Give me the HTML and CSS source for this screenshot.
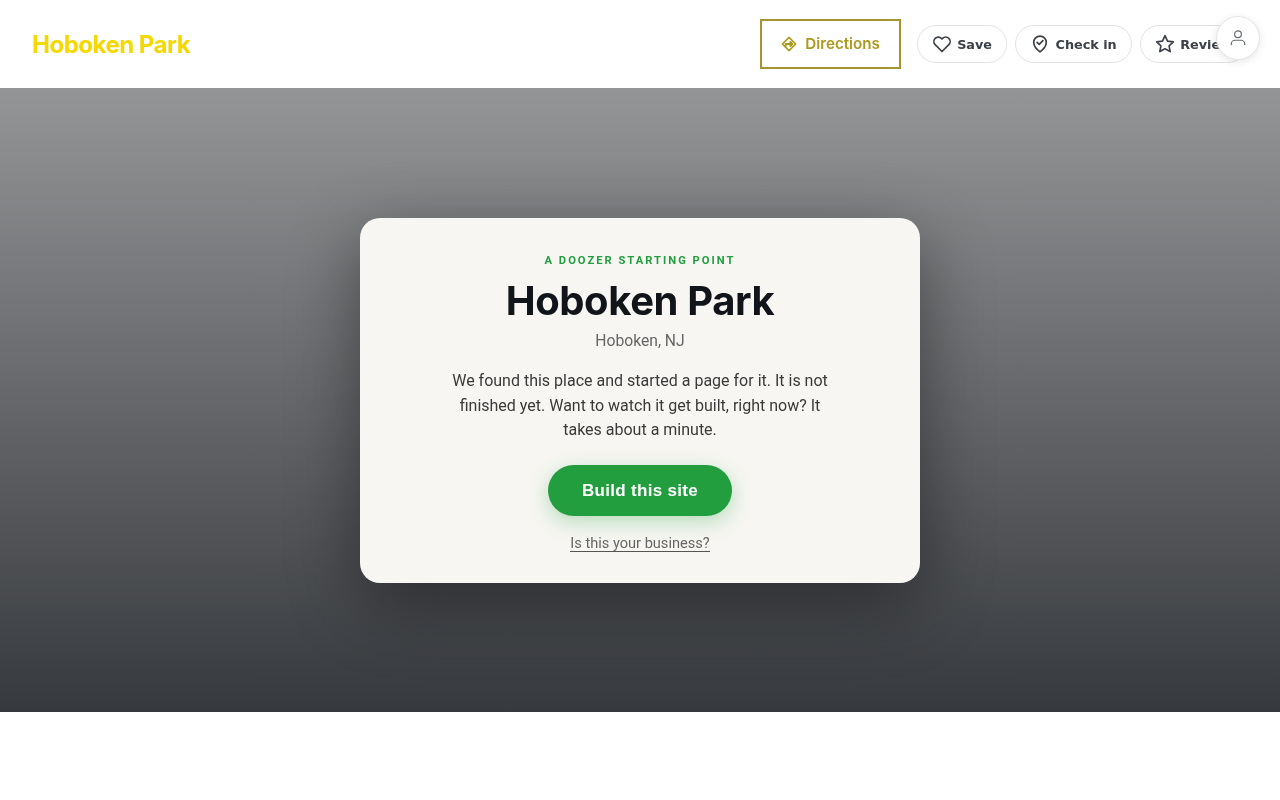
FILE: index.html
```html
<!DOCTYPE html>
<html lang="en">

<head>
    <meta charset="UTF-8">
    <meta name="viewport" content="width=device-width, initial-scale=1.0">
    <title>Hoboken Park</title>
    <link rel="stylesheet" href="styles.css">
</head>

<body>
    <header class="topbar">
        <a class="brand" href="#">Hoboken Park</a>
        <nav class="actions">
            <a class="directions" href="#">
                <svg width="16" height="16" viewBox="0 0 24 24" fill="none" stroke="currentColor" stroke-width="2.400" stroke-linejoin="round" stroke-linecap="round">
                    <path d="M12 2 22 12 12 22 2 12Z" />
                    <path stroke-width="3" d="M7 15v-3h10M14 9l3 3-3 3" />
                </svg>
                Directions
            </a>
            <a class="pill" href="#">
                <svg width="20" height="20" viewBox="0 0 24 24" fill="none" stroke="currentColor" stroke-width="2" stroke-linejoin="round">
                    <path d="M12 21 3.800 12.800a5.300 5.300 0 0 1 7.500-7.500l.7.7.7-.7a5.300 5.300 0 0 1 7.500 7.500Z" />
                </svg>
                Save
            </a>
            <a class="pill" href="#">
                <svg width="20" height="20" viewBox="0 0 24 24" fill="none" stroke="currentColor" stroke-width="2" stroke-linejoin="round" stroke-linecap="round">
                    <path d="M12 21.500s7.500-5.500 7.500-11.500a7.500 7.500 0 0 0-15 0c0 6 7.500 11.500 7.500 11.500Z" />
                    <path d="m8.500 10 2.500 2.500 4.500-4.500" />
                </svg>
                Check in
            </a>
            <a class="pill" href="#">
                <svg width="20" height="20" viewBox="0 0 24 24" fill="none" stroke="currentColor" stroke-width="2" stroke-linejoin="round">
                    <path d="m12 2 3 6.500 7 .9-5.100 4.800 1.300 6.900L12 17.700l-6.200 3.400 1.300-6.900L2 9.400l7-.9Z" />
                </svg>
                Review
            </a>
        </nav>
        <button class="account" aria-label="Account">
            <svg width="18" height="18" viewBox="0 0 24 24" fill="none" stroke="currentColor" stroke-width="1.600" stroke-linecap="round">
                <circle cx="12" cy="7" r="4.500" />
                <path d="M3 21v-1a5 5 0 0 1 5-5h8a5 5 0 0 1 5 5v1" />
            </svg>
        </button>
    </header>

    <main class="hero">
        <section class="card">
            <p class="eyebrow">A DOOZER STARTING POINT</p>
            <h1>Hoboken Park</h1>
            <p class="place">Hoboken, NJ</p>
            <p class="pitch">We found this place and started a page for it. It is not finished yet. Want to watch it get built, right now? It takes about a minute.</p>
            <a class="build" href="#">Build this site</a>
            <a class="claim" href="#">Is this your business?</a>
        </section>
    </main>
</body>

</html>
```
FILE: styles.css
```css
* {
    box-sizing: border-box;
}

body {
    margin: 0;
    height: 800px;
    overflow: hidden;
    background-color: #fff;
    font-family: Roboto, sans-serif;
}

a {
    text-decoration: none;
}

.topbar {
    position: relative;
    height: 88px;
    padding: 0 32px;
    display: flex;
    align-items: center;
    justify-content: space-between;
    background-color: #fff;
    will-change: transform;
}

.brand {
    font-family: Inter, sans-serif;
    font-size: 24px;
    font-weight: 700;
    letter-spacing: -0.5px;
    color: #f5d800;
}

.actions {
    display: flex;
    align-items: center;
    gap: 8px;
    margin-right: 1px;
}

.directions {
    display: flex;
    align-items: center;
    justify-content: center;
    gap: 8px;
    width: 141px;
    height: 50px;
    margin-right: 7.500px;
    padding-bottom: 2px;
    border: 2px solid #a39530;
    font-family: Inter, sans-serif;
    font-size: 15.2px;
    font-weight: 600;
    color: #ad9a1c;
}

.directions svg {
    margin-top: 2px;
}

.pill {
    display: flex;
    align-items: center;
    gap: 5.500px;
    height: 38px;
    padding: 0 14px;
    border: 1px solid #e2e3e5;
    border-radius: 19px;
    background-color: #fff;
    font-family: "DejaVu Sans", sans-serif;
    font-size: 12.8px;
    font-weight: 700;
    color: #3c4148;
}

.account {
    position: absolute;
    top: 16px;
    right: 20px;
    width: 44px;
    height: 44px;
    display: flex;
    align-items: center;
    justify-content: center;
    padding: 0 0 1px;
    border: 1px solid #e5e5e5;
    border-radius: 50%;
    background-color: #fff;
    box-shadow: 0 2px 8px rgba(0, 0, 0, 0.1);
    color: #666b72;
}

.hero {
    height: 624px;
    display: flex;
    align-items: center;
    justify-content: center;
    background: linear-gradient(180deg, #949597 0%, #36393d 100%);
}

.card {
    width: 560px;
    height: 365px;
    padding: 32px 40px;
    display: flex;
    flex-direction: column;
    align-items: center;
    border-radius: 20px;
    background-color: #f7f6f2;
    box-shadow: 0 20px 70px rgba(0, 0, 0, 0.42);
    text-align: center;
    will-change: transform;
}

.card p {
    margin: 0;
}

.card .eyebrow {
    margin-top: 1px;
    font-size: 11.2px;
    line-height: 20px;
    font-weight: 700;
    letter-spacing: 2px;
    color: #229e3f;
}

h1 {
    margin: 6px 0 0;
    font-family: Inter, sans-serif;
    font-size: 40px;
    line-height: 48px;
    font-weight: 700;
    letter-spacing: -0.4px;
    color: #111418;
}

.card .place {
    margin-top: 4px;
    font-size: 15.68px;
    line-height: 24px;
    color: #666;
}

.card .pitch {
    width: 400px;
    margin-top: 16px;
    font-size: 16px;
    line-height: 24.5px;
    color: #3a3a3a;
}

.build {
    flex-shrink: 0;
    margin-top: 22px;
    width: 184px;
    height: 51px;
    padding-top: 1px;
    display: flex;
    align-items: center;
    justify-content: center;
    border-radius: 26px;
    background-color: #229e3f;
    box-shadow: 0 6px 20px rgba(34, 158, 63, 0.3);
    font-family: "Liberation Sans", sans-serif;
    font-size: 17px;
    font-weight: 700;
    letter-spacing: 0.3px;
    color: #fff;
}

.claim {
    margin-top: 19px;
    border-bottom: 1px solid #555;
    font-size: 14.6px;
    line-height: 16px;
    color: #666;
}
```
